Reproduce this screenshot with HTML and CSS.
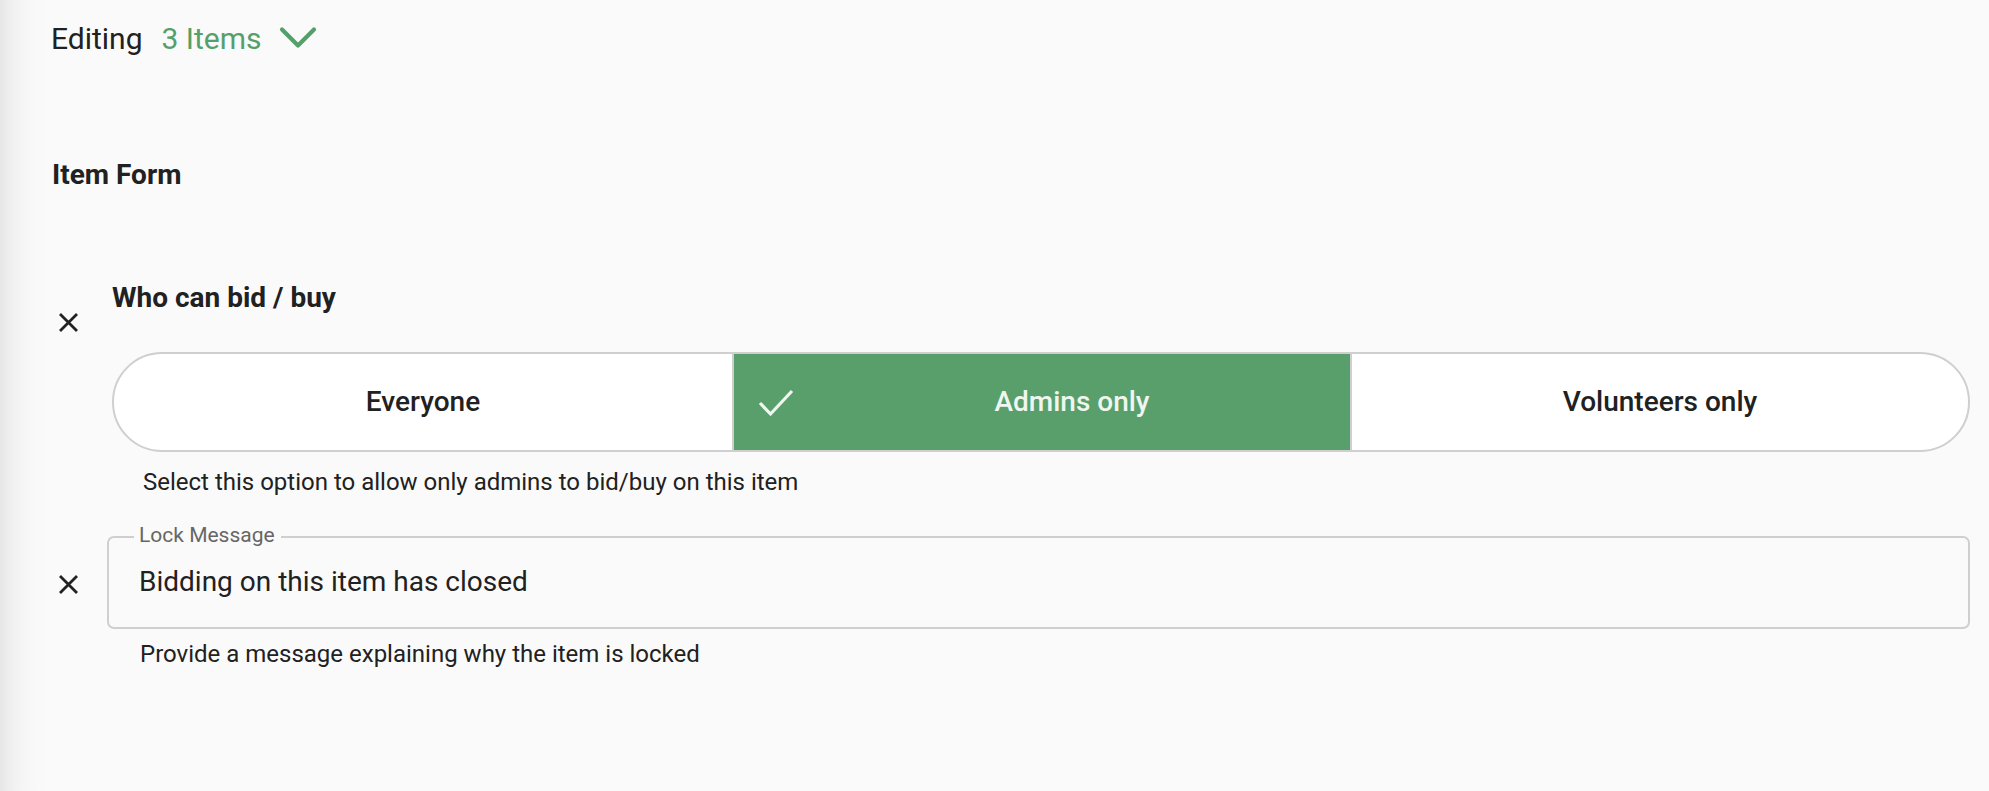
FILE: index.html
```html
<!DOCTYPE html>
<html lang="en">
<head>
<meta charset="utf-8">
<title>Editing 3 Items</title>
<link rel="stylesheet" href="styles.css">
</head>
<body>
<div class="page">
  <div class="header">
    <span class="editing">Editing</span>
    <span class="count">3 Items</span>
    <svg class="chevron" width="38" height="24" viewBox="0 0 38 24"><path d="M3 3.5 L19 19.5 L35 3.5" fill="none" stroke="#55a06a" stroke-width="4.2" stroke-linecap="round" stroke-linejoin="round"/></svg>
  </div>

  <h2 class="form-title">Item Form</h2>

  <div class="field field-bid">
    <div class="clear clear-bid">
      <svg width="21" height="21" viewBox="0 0 21 21"><path d="M2 2 L19 19 M19 2 L2 19" stroke="#222" stroke-width="2.8" fill="none"/></svg>
    </div>
    <div class="field-body">
      <div class="field-label">Who can bid / buy</div>
      <div class="segmented">
        <div class="segment">Everyone</div>
        <div class="segment selected">
          <svg class="check" width="36" height="28" viewBox="0 0 36 28"><path d="M2 14 L12.5 25 L34 2" fill="none" stroke="#eef6ef" stroke-width="3.2"/></svg>
          <span class="seg-text">Admins only</span>
        </div>
        <div class="segment">Volunteers only</div>
      </div>
      <div class="helper helper-bid">Select this option to allow only admins to bid/buy on this item</div>
    </div>
  </div>

  <div class="field field-lock">
    <div class="clear clear-lock">
      <svg width="21" height="21" viewBox="0 0 21 21"><path d="M2 2 L19 19 M19 2 L2 19" stroke="#222" stroke-width="2.8" fill="none"/></svg>
    </div>
    <div class="field-body">
      <div class="outlined">
        <span class="outlined-label">Lock Message</span>
        <div class="outlined-value">Bidding on this item has closed</div>
      </div>
      <div class="helper helper-lock">Provide a message explaining why the item is locked</div>
    </div>
  </div>
</div>
</body>
</html>
```

FILE: styles.css
```css
html, body {
  margin: 0;
  padding: 0;
}
body {
  width: 1989px;
  height: 791px;
  overflow: hidden;
  font-family: Roboto, "Liberation Sans", Arial, sans-serif;
  color: #212121;
  background: linear-gradient(to right, #e6e6e6 0px, #efefef 10px, #f5f5f5 22px, #f9f9f9 38px, #fafafa 50px);
}
.page {
  padding: 21px 19px 0 52px;
}
.header {
  display: flex;
  align-items: center;
  height: 36px;
}
.editing {
  font-size: 30px;
  line-height: 36px;
  color: #212121;
  margin-left: -1px;
}
.count {
  font-size: 30px;
  line-height: 36px;
  color: #55a06a;
  margin-left: 19px;
}
.chevron {
  margin-left: 17px;
  margin-top: -2px;
}
.form-title {
  margin: 101px 0 0 0;
  font-size: 28px;
  line-height: 34px;
  font-weight: 700;
  color: #212121;
}
.field {
  display: flex;
}
.field-bid {
  margin-top: 89px;
}
.clear {
  flex: none;
  display: flex;
  justify-content: flex-start;
}
.clear-bid {
  width: 60px;
  padding-left: 6px;
  box-sizing: border-box;
  padding-top: 31px;
}
.clear-lock {
  width: 55px;
  padding-left: 6px;
  box-sizing: border-box;
  padding-top: 38px;
}
.field-body {
  flex: 1;
  min-width: 0;
}
.field-label {
  font-size: 28px;
  line-height: 34px;
  font-weight: 700;
  color: #212121;
}
.segmented {
  margin-top: 36.6px;
  height: 100px;
  box-sizing: border-box;
  border: 2px solid #cfcfcf;
  border-radius: 50px;
  background: #ffffff;
  display: grid;
  grid-template-columns: 1fr 1fr 1fr;
  overflow: hidden;
}
.segment {
  display: flex;
  align-items: center;
  justify-content: center;
  font-size: 28px;
  font-weight: 500;
  color: #212121;
}
.segment + .segment {
  border-left: 2px solid #cfcfcf;
}
.segment.selected {
  background: #589f6b;
  color: #eef6ef;
  justify-content: flex-start;
}
.check {
  flex: none;
  margin-left: 24px;
  margin-top: 2px;
}
.seg-text {
  flex: 1;
  text-align: center;
}
.helper {
  font-size: 24px;
  line-height: 30px;
  color: #212121;
}
.helper-bid {
  margin-top: 15.6px;
  padding-left: 31px;
}
.field-lock {
  margin-top: 38.4px;
}
.outlined {
  position: relative;
  border: 2px solid #cfcfcf;
  border-radius: 7px;
  padding: 27.4px 30px 27.6px 30px;
}
.outlined-label {
  position: absolute;
  left: 25px;
  top: -15px;
  padding: 0 6px 0 5px;
  background: #fafafa;
  font-size: 21px;
  line-height: 24px;
  color: #666666;
}
.outlined-value {
  font-size: 28px;
  line-height: 34px;
  color: #212121;
}
.helper-lock {
  margin-top: 10.6px;
  padding-left: 33px;
}
```
